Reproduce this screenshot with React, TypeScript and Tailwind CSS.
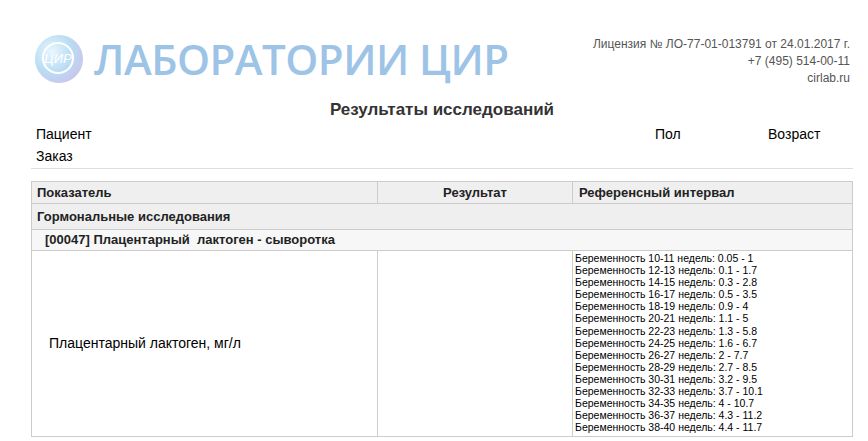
const ranges = [
  ["10-11", "0.05 - 1"], ["12-13", "0.1 - 1.7"], ["14-15", "0.3 - 2.8"], ["16-17", "0.5 - 3.5"],
  ["18-19", "0.9 - 4"], ["20-21", "1.1 - 5"], ["22-23", "1.3 - 5.8"], ["24-25", "1.6 - 6.7"],
  ["26-27", "2 - 7.7"], ["28-29", "2.7 - 8.5"], ["30-31", "3.2 - 9.5"], ["32-33", "3.7 - 10.1"],
  ["34-35", "4 - 10.7"], ["36-37", "4.3 - 11.2"], ["38-40", "4.4 - 11.7"],
];

export default function App() {
  return (
    <div className="w-[868px] h-[441px] bg-white overflow-hidden text-[#222]" style={{ fontFamily: '"Liberation Sans", Arial, sans-serif' }}>
      <div className="ml-[31px] w-[822px] pt-[32px]">
        <div className="flex justify-between">
          <div className="flex items-center h-[54px]">
            <svg width="52" height="54" viewBox="0 0 52 54" className="ml-[2px]">
              <defs>
                <radialGradient id="g" cx="0.35" cy="0.35" r="0.7">
                  <stop offset="0" stopColor="#eaf6ff" />
                  <stop offset="0.6" stopColor="#b9ddf3" />
                  <stop offset="1" stopColor="#c9c6ee" />
                </radialGradient>
              </defs>
              <circle cx="26" cy="27" r="24" fill="url(#g)" />
              <circle cx="25" cy="26" r="15" fill="none" stroke="#fff" strokeWidth="2" />
              <text x="25" y="31" textAnchor="middle" fontSize="13" fill="#fff" fontFamily="Liberation Sans" fontStyle="italic">ЦИР</text>
            </svg>
            <div className="ml-[9px] text-[#9dc3e6] font-semibold text-[42px] leading-none tracking-[-0.5px]" style={{ fontFamily: '"Open Sans", sans-serif' }}>ЛАБОРАТОРИИ ЦИР</div>
          </div>
          <div className="text-right text-[12px] leading-[17px] text-[#555] pt-[4px] mr-[3px]">
            <div>Лицензия № ЛО-77-01-013791 от 24.01.2017 г.</div>
            <div>+7 (495) 514-00-11</div>
            <div>cirlab.ru</div>
          </div>
        </div>
        <div className="text-center font-bold text-[17px] mt-[12px] leading-[22px] text-[#333]">Результаты исследований</div>
        <div className="flex text-[14px] leading-[22px] mt-[2px] pl-[5px] text-black">
          <div className="flex-1">Пациент</div>
          <div className="w-[113px]">Пол</div>
          <div className="w-[85px]">Возраст</div>
        </div>
        <div className="text-[14px] leading-[22px] pl-[5px] text-black">Заказ</div>
        <div className="border-t border-[#ddd] mt-[1px]" />
        <div className="mt-[12px] border border-[#ccc] text-[13px] font-bold text-[#222]">
          <div className="flex bg-[#efefef] h-[21px] items-center">
            <div className="w-[346px] pl-[5px] border-r border-[#ccc] h-full flex items-center">Показатель</div>
            <div className="w-[195px] text-center border-r border-[#ccc] h-full flex items-center justify-center">Результат</div>
            <div className="flex-1 pl-[6px]">Референсный интервал</div>
          </div>
          <div className="bg-[#efefef] h-[26px] flex items-center pl-[5px] border-t border-[#ccc]">Гормональные исследования</div>
          <div className="bg-[#f7f7f7] h-[21px] flex items-center pl-[13px] border-t border-[#ccc]">[00047] Плацентарный&nbsp; лактоген - сыворотка</div>
          <div className="flex border-t border-[#ccc] font-normal">
            <div className="w-[346px] border-r border-[#ccc] flex items-center pl-[17px] text-[14px] text-black">Плацентарный лактоген, мг/л</div>
            <div className="w-[195px] border-r border-[#ccc]" />
            <div className="flex-1 pl-[2px] pt-[1px] pb-[3px] text-[10.5px] leading-[12.1px] text-black">
              {ranges.map(([w, v]) => (
                <div key={w}>Беременность {w} недель: {v}</div>
              ))}
            </div>
          </div>
        </div>
      </div>
    </div>
  );
}
